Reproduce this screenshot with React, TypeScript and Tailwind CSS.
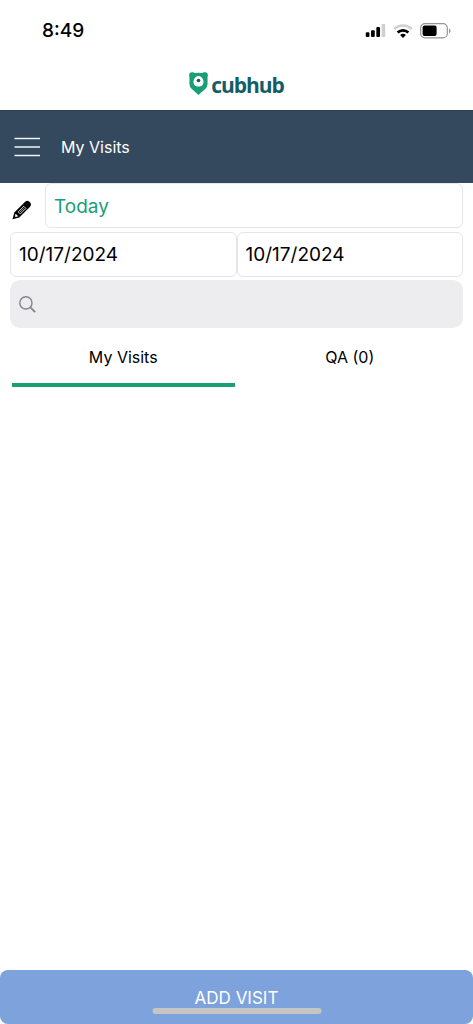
import { useState } from "react";

function StatusBar() {
  return (
    <div className="flex h-15 items-center justify-between pt-px pr-[22px] pl-[42px]">
      <span className="text-[19px] leading-6 font-medium">8:49</span>
      <div className="flex items-center gap-[7px]">
        <svg width="21" height="13" viewBox="0 0 21 14" aria-hidden="true">
          <rect x="0" y="9" width="4" height="5" rx="1.2" />
          <rect x="5.7" y="6.6" width="4" height="7.4" rx="1.2" />
          <rect x="11.4" y="3.2" width="4" height="10.8" rx="1.2" />
          <rect x="17.1" y="0" width="3.9" height="14" rx="1.2" fill="#cfcfcf" />
        </svg>
        <svg width="20" height="14" viewBox="0 0 20 14" fill="none" aria-hidden="true">
          <path d="M1.2 5.1a12.6 12.6 0 0 1 17.6 0" stroke="#cfcfcf" strokeWidth="2.5" />
          <path d="M4.6 8.5a7.8 7.8 0 0 1 10.8 0" stroke="#000" strokeWidth="2.6" />
          <path d="M7.1 11.1a4.2 4.2 0 0 1 5.8 0L10 14z" fill="#000" />
        </svg>
        <svg width="31" height="16" viewBox="0 0 31 16" aria-hidden="true">
          <rect x="0.7" y="0.7" width="26.6" height="14.2" rx="4.2" fill="none" stroke="#959595" strokeWidth="1.2" />
          <rect x="2.6" y="2.6" width="14" height="10.4" rx="2" />
          <path d="M29 5.5c2 .7 2 4 0 4.7z" fill="#959595" />
        </svg>
      </div>
    </div>
  );
}

function Logo() {
  return (
    <div className="flex h-[50px] items-center justify-center gap-[3px] pb-[3px]">
      <svg width="19" height="23" viewBox="0 0 19 23" aria-hidden="true">
        <path
          d="M3 0.3C4.5 0.3 5.2 0.6 5.8 1Q9.500 0.600 13.200 1C13.800 0.600 14.500 0.300 16 0.300C17.700 0.300 18.900 1.500 18.900 3C18.900 3.900 18.700 4.500 18.500 5L18.600 12Q18.500 14.900 16.400 16.800L9.500 22.900L2.600 16.800Q0.500 14.900 0.400 12L0.500 5C0.300 4.500 0.100 3.900 0.100 3C0.100 1.500 1.300 0.300 3 0.300Z"
          fill="#199e76"
        />
        <path d="M9.5 4c2.700 0 4.700 2.500 5 5.500 0.300 3-2 5-5 5s-5.300-2-5-5c0.300-3 2.300-5.500 5-5.500z" fill="#fff" />
        <ellipse cx="9.5" cy="8.500" rx="1.900" ry="1.700" fill="#135e66" />
      </svg>
      <span className="pt-[2px] font-['Open_Sans','Noto_Sans',sans-serif] text-[21px] leading-7 font-bold tracking-tighter text-[#135e66]">
        cubhub
      </span>
    </div>
  );
}

function PencilIcon() {
  return (
    <svg width="20" height="20" viewBox="0 0 20 20" aria-hidden="true">
      <path d="M0.5 19.3L2.3 12.6L12.9 2Q14.800 0.200 16.900 1.200L18.600 3Q19.700 5 17.900 7L7.200 17.500Z" />
      <path d="M3.6 13.7L6.2 16.3L3.7 17L3 16.300Z" fill="#fff" />
      <path d="M6.2 11.9L11.8 6.3L13.9 8.400L8.300 14Z" stroke="#fff" strokeWidth="0.8" />
      <path d="M8.2 12L12 8.2" stroke="#fff" strokeWidth="0.7" />
    </svg>
  );
}

export default function App() {
  const [tab, setTab] = useState("visits");
  const tabs = [
    { id: "visits", label: "My Visits" },
    { id: "qa", label: "QA (0)" },
  ];
  const field = "h-[45px] w-full min-w-0 rounded-md border border-[#e6e6e8] bg-white px-2 text-[19px]";

  return (
    <div className="flex min-h-screen flex-col bg-white font-[Inter,'Noto_Sans',sans-serif] text-black">
      <StatusBar />
      <Logo />
      <header className="flex h-[73px] items-center gap-5 border-t border-[#2b3e50] bg-[#35495e] px-[14px] text-white">
        <button type="button" aria-label="Open menu">
          <svg width="27" height="20" viewBox="0 0 27 20" stroke="#eef3f3" strokeWidth="1.7" aria-hidden="true">
            <path d="M0.5 1.5H26M0.5 10H26M0.5 18.5H26" />
          </svg>
        </button>
        <h1 className="text-base">My Visits</h1>
      </header>

      <main className="flex-1 px-[10px]">
        <div className="flex items-end">
          <button type="button" aria-label="Edit filter" className="w-[35px] shrink-0 pb-2 pl-[2px]">
            <PencilIcon />
          </button>
          <select aria-label="Period" className={`${field} appearance-none pt-[3px] text-[#199e76]`} defaultValue="Today">
            <option>Today</option>
          </select>
        </div>
        <div className="mt-1 grid grid-cols-2">
          <input aria-label="Start date" className={field} defaultValue="10/17/2024" />
          <input aria-label="End date" className={field} defaultValue="10/17/2024" />
        </div>
        <label className="mt-[3px] flex h-12 items-center gap-2 rounded-[10px] bg-[#ededef] px-[9px]">
          <svg width="17" height="17" viewBox="0 0 17 17" fill="none" stroke="#85858a" aria-hidden="true">
            <circle cx="6.9" cy="6.9" r="6.1" strokeWidth="1.4" />
            <path d="M11.4 11.4L16.2 16.2" strokeWidth="1.9" />
          </svg>
          <input type="search" aria-label="Search visits" className="min-w-0 flex-1 bg-transparent text-lg outline-none" />
        </label>
        <div role="tablist" className="grid grid-cols-2 gap-1 px-[2px]">
          {tabs.map(({ id, label }) => (
            <button
              key={id}
              type="button"
              role="tab"
              aria-selected={tab === id}
              onClick={() => setTab(id)}
              className={`h-[59px] border-b-4 pt-[3px] text-base ${tab === id ? "border-[#199e76]" : "border-transparent"}`}
            >
              {label}
            </button>
          ))}
        </div>
      </main>

      <footer className="relative">
        <button type="button" className="h-[54px] w-full rounded-lg bg-[#7da2dc] pt-[3px] text-[17px] text-white">
          ADD VISIT
        </button>
        <div className="absolute bottom-[10px] left-1/2 h-[6px] w-[169px] -translate-x-1/2 rounded-full bg-[#c5c5c5]" />
      </footer>
    </div>
  );
}
